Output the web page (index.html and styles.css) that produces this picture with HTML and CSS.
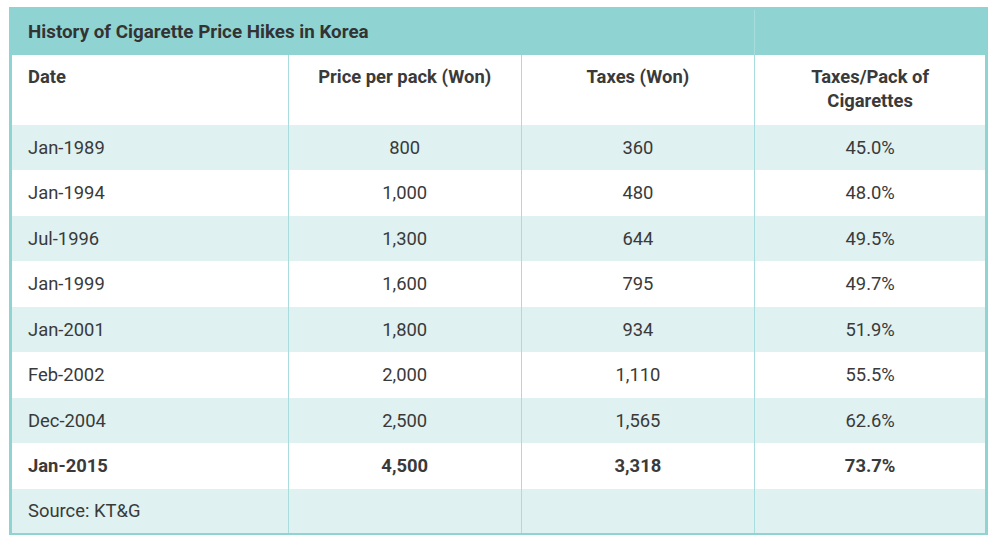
FILE: index.html
```html
<!DOCTYPE html>
<html>
<head>
<meta charset="utf-8">
<link rel="stylesheet" href="styles.css">
</head>
<body>
<div class="wrap">
<table class="tbl">
  <colgroup>
    <col class="c1"><col class="c2"><col class="c3"><col class="c4">
  </colgroup>
  <tr class="title"><td colspan="3">History of Cigarette Price Hikes in Korea</td><td></td></tr>
  <tr class="head"><th class="l">Date</th><th>Price per pack (Won)</th><th>Taxes (Won)</th><th>Taxes/Pack of<br>Cigarettes</th></tr>
  <tr class="alt"><td class="l">Jan-1989</td><td>800</td><td>360</td><td>45.0%</td></tr>
  <tr><td class="l">Jan-1994</td><td>1,000</td><td>480</td><td>48.0%</td></tr>
  <tr class="alt"><td class="l">Jul-1996</td><td>1,300</td><td>644</td><td>49.5%</td></tr>
  <tr><td class="l">Jan-1999</td><td>1,600</td><td>795</td><td>49.7%</td></tr>
  <tr class="alt"><td class="l">Jan-2001</td><td>1,800</td><td>934</td><td>51.9%</td></tr>
  <tr><td class="l">Feb-2002</td><td>2,000</td><td>1,110</td><td>55.5%</td></tr>
  <tr class="alt"><td class="l">Dec-2004</td><td>2,500</td><td>1,565</td><td>62.6%</td></tr>
  <tr class="bold"><td class="l">Jan-2015</td><td>4,500</td><td>3,318</td><td>73.7%</td></tr>
  <tr class="alt"><td class="l">Source: KT&amp;G</td><td></td><td></td><td></td></tr>
</table>
</div>
</body>
</html>
```

FILE: styles.css
```css
html, body { margin: 0; padding: 0; background: #fff; }
.wrap { padding: 7px 1px 0 9px; }
.tbl {
  width: 979px;
  border-collapse: collapse;
  border: 3px solid #8fd3d3;
  font-family: Roboto, "Liberation Sans", sans-serif;
  font-size: 18.4px;
  color: #3a3a3a;
  table-layout: fixed;
}
.c1 { width: 277px; }
.c2 { width: 232px; }
.c3 { width: 233px; }
.c4 { width: 231px; }
.tbl td, .tbl th {
  border-left: 1px solid #a9dcdc;
  padding: 0 16px;
  text-align: center;
  height: 45.5px;
  box-sizing: border-box;
}
.tbl td:first-child, .tbl th:first-child { border-left: none; }
.tbl .l { text-align: left; }
.title td {
  background: #8fd3d3;
  height: 46px;
  font-weight: 700;
  font-size: 18.8px;
  text-align: left;
  color: #333;
  padding-left: 16px;
}
.title td + td { border-left: 1px solid #a5dcdc; }
.head th {
  height: 70px;
  vertical-align: top;
  padding-top: 10px;
  font-weight: 700;
  color: #3a3a3a;
  line-height: 24px;
}
.alt td { background: #dff1f1; }
.bold td { font-weight: 700; }
```
